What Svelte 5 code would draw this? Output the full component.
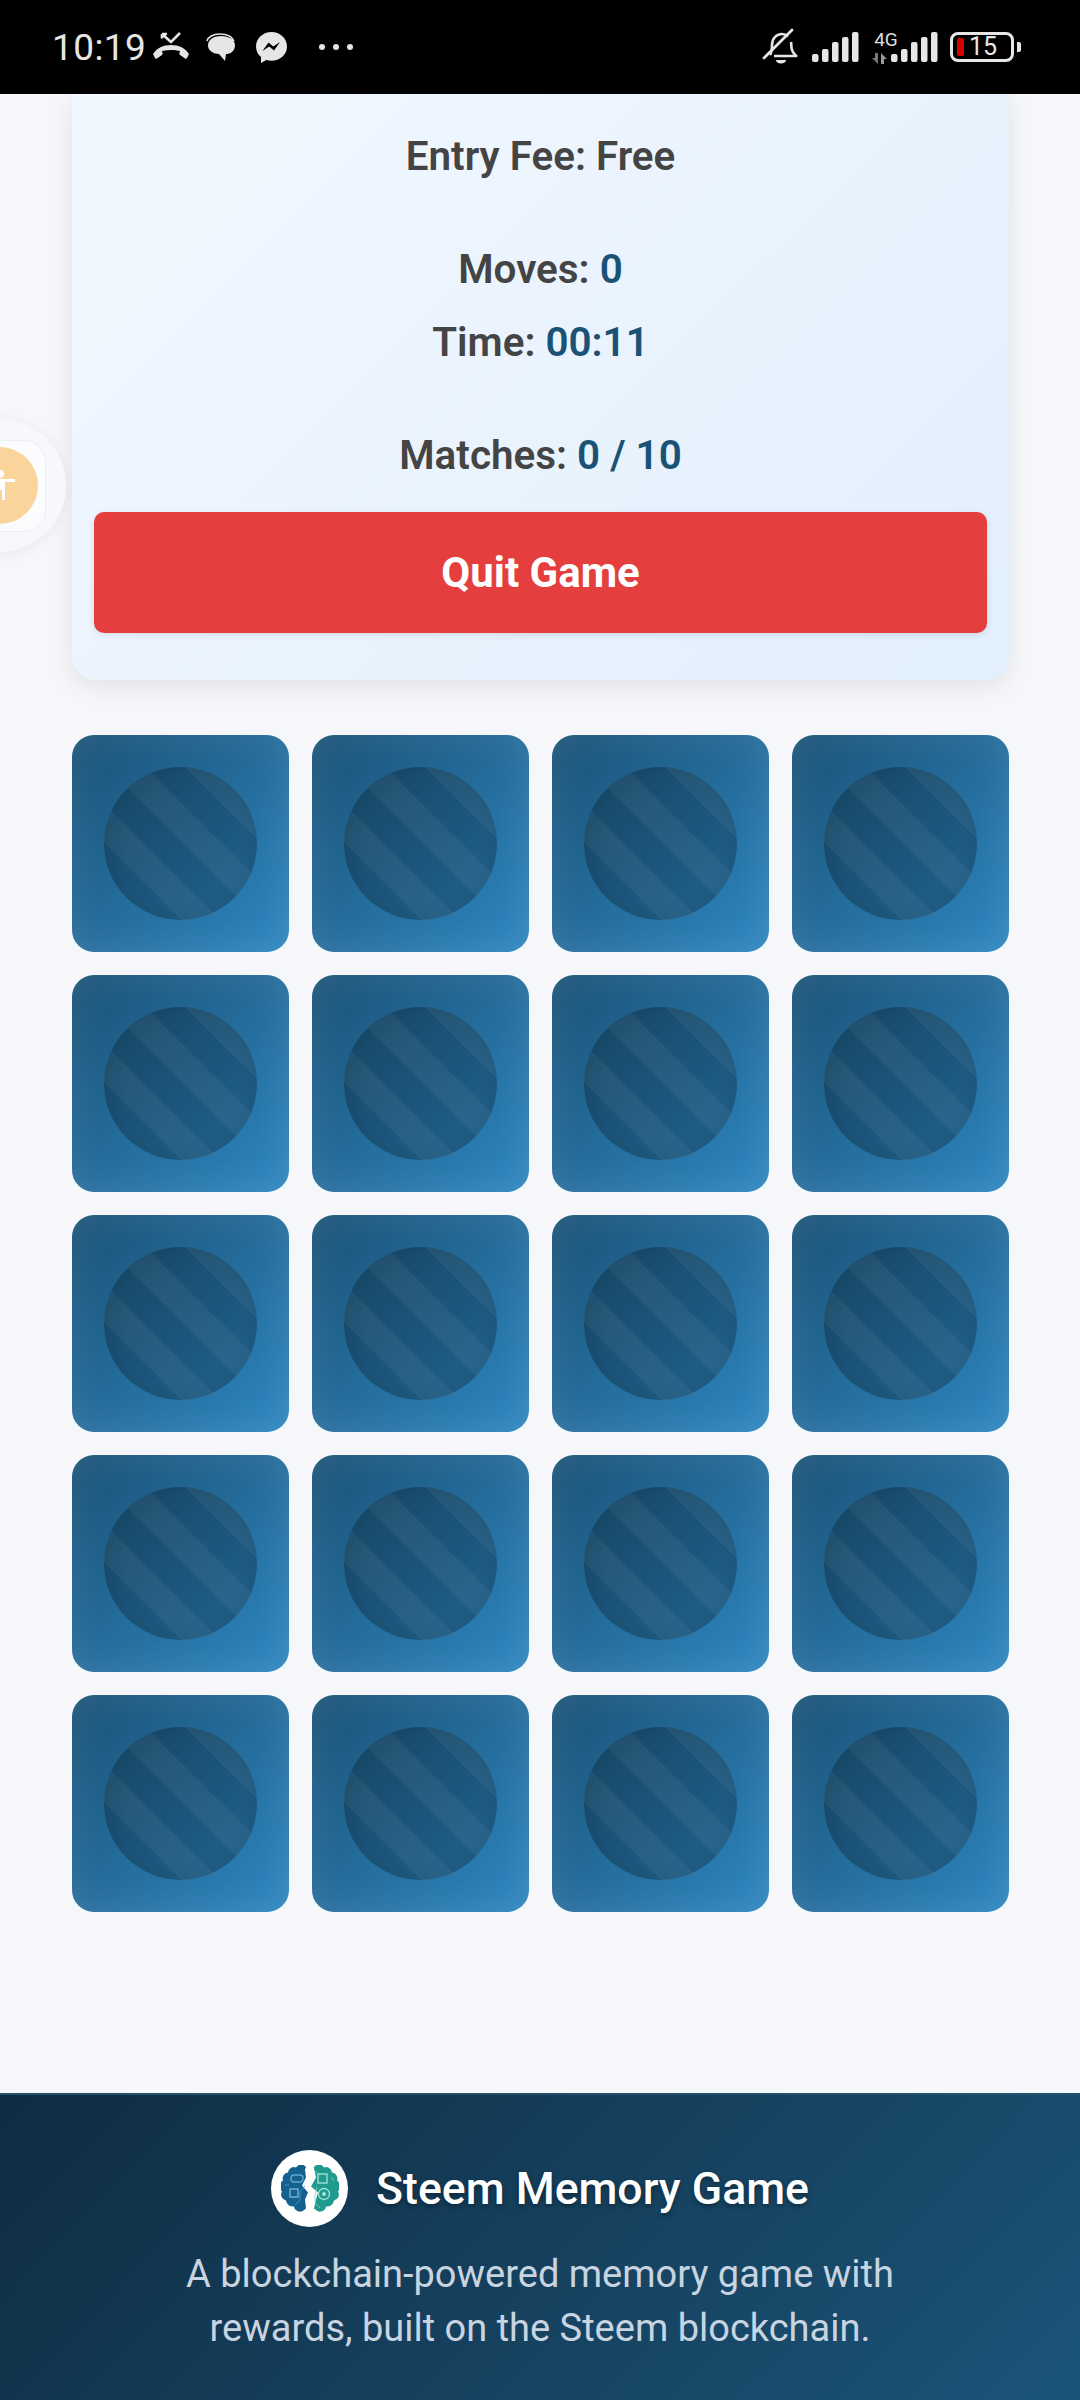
<script lang="ts">
  const cards = Array.from({ length: 20 }, (_, i) => i);
  const bars = [
    { x: 0, h: 8 },
    { x: 10, h: 13 },
    { x: 20, h: 20 },
    { x: 30, h: 25 },
    { x: 40, h: 30 },
  ];
</script>

<div class="phone">
  <header class="statusbar">
    <span class="time">10:19</span>
    <!-- missed call -->
    <svg class="ic-call" width="38" height="30" viewBox="0 0 38 30">
      <path d="M1 22c4-6 10-9 18-9s14 3 18 9l-2 4c-.4.7-1.200.9-1.900.4l-5.100-3.400c-.6-.4-.8-1-.6-1.700l.6-2.300c-5-1.500-12-1.500-18 0l.6 2.300c.2.700 0 1.300-.6 1.700l-5.100 3.400c-.7.5-1.500.3-1.900-.4z" fill="#e6e6e6" />
      <path d="M10 2l9 8 9-9M10 2v4.500M10 2h5" fill="none" stroke="#e6e6e6" stroke-width="2.600" />
    </svg>
    <!-- chat bubble -->
    <svg class="ic-chat" width="30" height="30" viewBox="0 0 30 30">
      <path d="M1 9c1-4 6-7 13-7 7 0 12 2 14 7" fill="none" stroke="#e6e6e6" stroke-width="1.600" />
      <path d="M15 4c8 0 14 3.500 14 9.500s-5 8.500-9 8.500l-1 7-6-7C8 22 2 19 2 13.500S7 4 15 4z" fill="#e6e6e6" />
    </svg>
    <!-- messenger -->
    <svg class="ic-msg" width="31" height="31" viewBox="0 0 31 31">
      <path d="M15.500 0C7 0 0 6.300 0 14.500c0 4.300 1.900 8 5 10.600V31l5.300-3c1.600.5 3.400.700 5.200.700 8.500 0 15.500-6 15.500-14.200S24 0 15.500 0z" fill="#e6e6e6" />
      <path d="M6.500 19l6-8.500 4.800 4 6.700-4.500-6 8.500-4.800-4z" fill="#000" />
    </svg>
    <span class="dots"><i></i><i></i><i></i></span>

    <div class="status-right">
      <!-- muted bell -->
      <svg class="ic-bell" width="36" height="38" viewBox="0 0 36 38">
        <path d="M8 27c2-3 2-6 2-10 0-6 4-11 10-11 2.500 0 4.500 1 6 2.500M29 14c.3 1 .3 2 .3 3.500 0 4 1 7 5 10.500H12" fill="none" stroke="#e6e6e6" stroke-width="2.600" stroke-linejoin="round" />
        <path d="M2 30L30 2" stroke="#e6e6e6" stroke-width="2.800" stroke-linecap="round" />
        <path d="M14 32h10c0 2-2 3.500-5 3.500s-5-1.500-5-3.500z" fill="#e6e6e6" />
      </svg>
      <svg class="ic-signal" width="47" height="30" viewBox="0 0 47 30">
        {#each bars as b}
          <rect x={b.x} y={30 - b.h} width="6.500" height={b.h} rx="2" fill="#e6e6e6" />
        {/each}
      </svg>
      <div class="net">
        <span class="net-label">4G</span>
        <svg width="16" height="11" viewBox="0 0 16 11">
          <path d="M0 5h3V0h3v11z" fill="#777" />
          <path d="M9 0v11h3V6h3z" fill="#999" />
        </svg>
      </div>
      <svg class="ic-signal2" width="47" height="30" viewBox="0 0 47 30">
        {#each bars as b}
          <rect x={b.x} y={30 - b.h} width="6.500" height={b.h} rx="2" fill="#e6e6e6" />
        {/each}
      </svg>
      <div class="battery">
        <i class="battery-level"></i>
        <span>15</span>
      </div>
      <i class="battery-nub"></i>
    </div>
  </header>

  <main class="content">
    <section class="panel">
      <p class="fee">Entry Fee: Free</p>
      <p class="stat first">Moves: <b>0</b></p>
      <p class="stat">Time: <b>00:11</b></p>
      <p class="stat matches">Matches: <b>0 / 10</b></p>
      <button class="quit">Quit Game</button>
    </section>

    <div class="board">
      {#each cards as c (c)}
        <div class="card"><div class="disc"></div></div>
      {/each}
    </div>
  </main>

  <footer class="footer">
    <div class="brand">
      <div class="logo">
        <svg width="58" height="48" viewBox="0 0 58 48">
          <path d="M25 2a6 6 0 0 0-10 .5a6 6 0 0 0-8 5a6 6 0 0 0-5 8a7 7 0 0 0-1 11a6 6 0 0 0 4 9a7 7 0 0 0 8 6a6 6 0 0 0 10 3.500l2-1.500l-1-9l3-7l-6-7l4-8l-1-8z" fill="#14618f" />
          <path d="M33 2a6 6 0 0 1 10 .5a6 6 0 0 1 8 5a6 6 0 0 1 5 8a7 7 0 0 1 1 11a6 6 0 0 1-4 9a7 7 0 0 1-8 6a6 6 0 0 1-10 3.500l-2-1.500l2-9l2-7l-7-6l5-9l-2-9z" fill="#1f9a8c" />
          <rect x="10" y="10" width="12" height="7" rx="3" fill="none" stroke="#5fa8cf" stroke-width="1.300" />
          <rect x="9" y="24" width="8" height="8" fill="none" stroke="#7dbbdb" stroke-width="1.300" />
          <path d="M24 21l-5 6v8l-5 5M4 20h4" stroke="#4f9ac6" stroke-width=".8" fill="none" />
          <rect x="37" y="9" width="9" height="9" fill="none" stroke="#a6e4da" stroke-width="1.300" />
          <circle cx="43" cy="29" r="5.500" fill="none" stroke="#a6e4da" stroke-width="1.300" />
          <circle cx="43" cy="29" r="2" fill="#a6e4da" />
          <path d="M36 22l-2 8v8l5 5M50 12l3 4M34 6l3 3" stroke="#7fd6c8" stroke-width=".8" fill="none" />
        </svg>
      </div>
      <h2>Steem Memory Game</h2>
    </div>
    <p class="about">A blockchain-powered memory game with<br />rewards, built on the Steem blockchain.</p>
  </footer>

  <!-- floating accessibility widget, half off the left edge -->
  <div class="a11y">
    <div class="a11y-box">
      <div class="a11y-dot">
        <svg width="40" height="40" viewBox="0 0 40 40">
          <circle cx="20" cy="8" r="4" fill="#fff" />
          <path d="M5 13h30v3H25v18h-3V24h-4v10h-3V16H5z" fill="#fff" />
        </svg>
      </div>
    </div>
  </div>
</div>

<style>
  :global(body) {
    margin: 0;
    background: #f5f7fb;
  }
  .phone {
    position: relative;
    width: 1080px;
    height: 2400px;
    overflow: hidden;
    display: flex;
    flex-direction: column;
    background: #f5f7fb;
    font-family: Roboto, "Liberation Sans", sans-serif;
  }

  .statusbar {
    position: relative;
    z-index: 2;
    height: 94px;
    flex: none;
    background: #000;
    display: flex;
    align-items: center;
    padding: 0 59px 0 52px;
    box-sizing: border-box;
    color: #e6e6e6;
  }
  .time {
    font-size: 37px;
    letter-spacing: 0.4px;
    width: 100px;
  }
  .ic-chat {
    margin-left: 16px;
  }
  .ic-msg {
    margin-left: 20px;
  }
  .dots {
    display: flex;
    gap: 8px;
    margin-left: 32px;
  }
  .dots i {
    width: 6px;
    height: 6px;
    border-radius: 50%;
    background: #e6e6e6;
  }
  .status-right {
    margin-left: auto;
    display: flex;
    align-items: center;
  }
  .ic-signal {
    margin-left: 14px;
  }
  .net {
    display: flex;
    flex-direction: column;
    align-items: center;
    width: 32px;
    margin-left: 7px;
    margin-right: -12px;
  }
  .net-label {
    font-size: 19px;
    line-height: 20px;
    margin-bottom: 3px;
    color: #ddd;
    margin-left: 8px;
  }
  .net svg {
    margin-right: 4px;
  }
  .ic-signal2 {
    margin-left: 5px;
  }
  .battery {
    position: relative;
    width: 64px;
    height: 30px;
    margin-left: 12px;
    box-sizing: border-box;
    border: 3px solid #e6e6e6;
    border-radius: 8px;
    display: flex;
    align-items: center;
    padding-left: 4px;
    gap: 5px;
  }
  .battery-level {
    width: 7px;
    height: 18px;
    border-radius: 2px;
    background: #d50000;
  }
  .battery span {
    font-size: 25px;
    line-height: 24px;
    color: #e6e6e6;
  }
  .battery-nub {
    width: 4px;
    height: 10px;
    border-radius: 0 2px 2px 0;
    background: #e6e6e6;
    margin-left: 3px;
  }

  .content {
    flex: 1;
    padding: 0 71px 0 72px;
  }
  .panel {
    padding: 35px 22px 47px 22px;
    border-radius: 0 0 24px 24px;
    background: linear-gradient(135deg, #f2f8ff, #e2effd);
    box-shadow: 0 6px 24px rgba(0, 0, 0, 0.09);
    text-align: center;
    color: #444;
  }
  .panel p {
    margin: 0;
    font-size: 40.400px;
    line-height: 56px;
    font-weight: 600;
  }
  .panel b {
    font-weight: 600;
    color: #1a5276;
  }
  .stat {
    margin-top: 17px !important;
  }
  .stat.first,
  .stat.matches {
    margin-top: 57px !important;
  }
  .quit {
    display: block;
    width: 100%;
    height: 121px;
    margin-top: 28px;
    border: none;
    border-radius: 10px;
    background: #e53e3e;
    color: #fff;
    font-family: inherit;
    font-size: 42px;
    font-weight: 700;
    box-shadow: 0 2px 6px rgba(0, 0, 0, 0.1);
  }

  .board {
    display: grid;
    grid-template-columns: repeat(4, 1fr);
    gap: 23px 22.500px;
    margin-top: 55px;
  }
  .card {
    height: 217px;
    border-radius: 22px;
    display: flex;
    align-items: center;
    justify-content: center;
    background: linear-gradient(135deg, #1a5276, #2e86c1);
    box-shadow: inset 0 0 40px rgba(255, 255, 255, 0.1);
  }
  .disc {
    width: 153px;
    height: 153px;
    border-radius: 50%;
    background:
      repeating-linear-gradient(
        45deg,
        rgba(255, 255, 255, 0.05) 0 27.5px,
        transparent 27.5px 55px
      ),
      rgba(0, 0, 0, 0.22);
    box-shadow: inset 0 0 20px rgba(0, 0, 0, 0.1);
  }

  .footer {
    flex: none;
    height: 307px;
    box-sizing: border-box;
    padding-top: 55px;
    background: linear-gradient(135deg, #0f2c42, #1b5478);
    border-top: 2px solid #24506c;
    text-align: center;
  }
  .brand {
    display: flex;
    align-items: center;
    justify-content: center;
    gap: 28px;
  }
  .logo {
    width: 77px;
    height: 77px;
    border-radius: 50%;
    background: #fff;
    display: flex;
    align-items: center;
    justify-content: center;
  }
  .footer h2 {
    margin: 0;
    font-size: 44.600px;
    font-weight: 500;
    color: #fff;
    text-shadow: 0 2px 5px rgba(0, 0, 0, 0.4);
  }
  .about {
    margin: 20px 0 0;
    font-size: 38px;
    line-height: 54px;
    font-weight: 400;
    color: #c8d4e0;
  }

  .a11y {
    position: absolute;
    left: -67px;
    top: 419px;
    z-index: 1;
    width: 133px;
    height: 133px;
    border-radius: 50%;
    background: #f7f8fb;
    box-shadow: 0 2px 14px rgba(0, 0, 0, 0.06);
    display: flex;
    align-items: center;
    justify-content: center;
  }
  .a11y-box {
    width: 92px;
    height: 92px;
    border-radius: 22px;
    background: #fbfcfe;
    border: 1px solid #eceef2;
    box-sizing: border-box;
    display: flex;
    align-items: center;
    justify-content: center;
  }
  .a11y-dot {
    width: 77px;
    height: 77px;
    border-radius: 50%;
    background: #fbd49b;
    display: flex;
    align-items: center;
    justify-content: center;
  }
</style>
